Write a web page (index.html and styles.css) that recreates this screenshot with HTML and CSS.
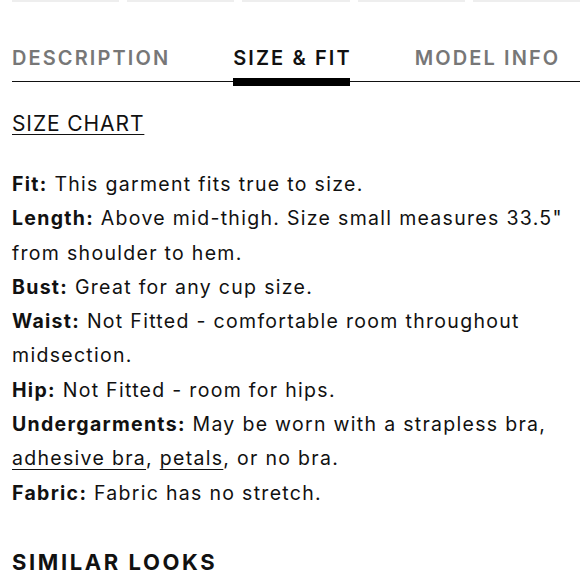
FILE: index.html
```html
<!DOCTYPE html>
<html>
<head>
<meta charset="utf-8">
<link rel="stylesheet" href="styles.css">
</head>
<body>
<div class="topstrip">
  <span class="seg"></span><span class="seg"></span><span class="seg"></span><span class="seg"></span><span class="seg"></span>
</div>
<nav class="tabs">
  <span class="tab">DESCRIPTION</span>
  <span class="tab active">SIZE &amp; FIT</span>
  <span class="tab">MODEL INFO</span>
</nav>
<main class="content">
  <a class="size-chart">SIZE CHART</a>
  <div class="specs">
    <p><b>Fit:</b> This garment fits true to size.</p>
    <p><b>Length:</b> Above mid-thigh. Size small measures 33.5" from shoulder to hem.</p>
    <p><b>Bust:</b> Great for any cup size.</p>
    <p><b>Waist:</b> Not Fitted - comfortable room throughout midsection.</p>
    <p><b>Hip:</b> Not Fitted - room for hips.</p>
    <p><b>Undergarments:</b> May be worn with a strapless bra, <a class="link">adhesive bra</a>, <a class="link">petals</a>, or no bra.</p>
    <p><b>Fabric:</b> Fabric has no stretch.</p>
  </div>
  <h2 class="similar">SIMILAR LOOKS</h2>
</main>
</body>
</html>
```
FILE: styles.css
```css
html, body {
  margin: 0;
  padding: 0;
  background: #fff;
}
body {
  font-family: Inter, "Liberation Sans", sans-serif;
  color: #111;
  width: 580px;
  overflow: hidden;
}
.topstrip {
  display: flex;
  gap: 8px;
  padding-left: 12px;
  height: 2px;
}
.seg {
  flex: 1;
  background: #eeeeee;
}
.tabs {
  display: flex;
  gap: 63px;
  margin: 44px 0 0 12px;
  border-bottom: 1px solid #111;
  align-items: flex-end;
}
.tab {
  position: relative;
  font-size: 20px;
  line-height: 24px;
  letter-spacing: 2.1px;
  font-weight: 600;
  color: #777;
  padding-bottom: 11px;
  white-space: nowrap;
}
.tab.active {
  color: #111;
}
.tab.active::after {
  content: "";
  position: absolute;
  left: 0;
  right: 2px;
  bottom: -5px;
  height: 8px;
  background: #000;
}
.content {
  padding: 0 12px;
}
.size-chart {
  display: inline-block;
  margin-top: 30px;
  font-size: 21px;
  line-height: 24px;
  letter-spacing: 0.9px;
  text-decoration: underline;
  text-decoration-thickness: 1px;
  text-underline-offset: 3px;
  color: #111;
}
.specs {
  margin-top: 31px;
}
.specs p {
  margin: 0;
  font-size: 19.5px;
  line-height: 34.3px;
  letter-spacing: 1.3px;
}
.specs b {
  font-weight: 700;
}
.link {
  text-decoration: underline;
  text-decoration-thickness: 1px;
  text-underline-offset: 4px;
}
.similar {
  margin: 38px 0 0 0;
  font-size: 22px;
  line-height: 28px;
  font-weight: 700;
  letter-spacing: 2.6px;
}
```
